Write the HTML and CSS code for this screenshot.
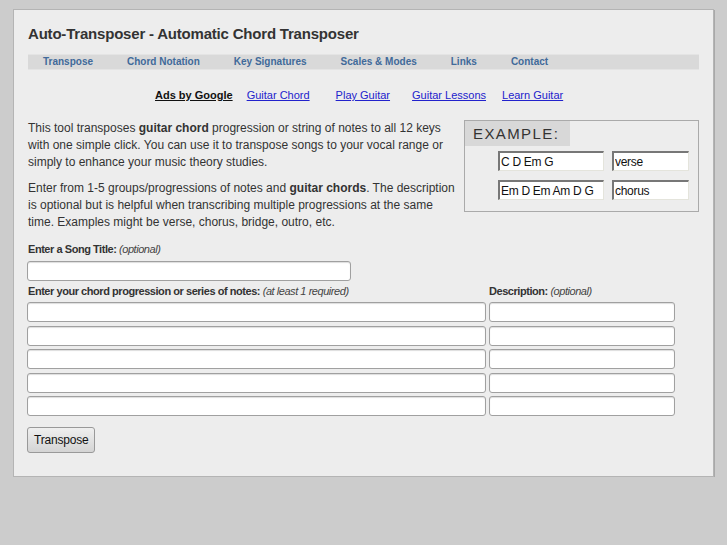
FILE: index.html
```html
<!DOCTYPE html>
<html lang="en">
<head>
  <meta charset="UTF-8">
  <title>Auto-Transposer - Automatic Chord Transposer</title>
  <link rel="stylesheet" href="styles.css">
</head>
<body>

  <div class="page">
    <!-- Header -->
    <h1 class="site-title">Auto-Transposer - Automatic Chord Transposer</h1>

    <!-- Navigation -->
    <ul class="nav">
      <li><a href="#">Transpose</a></li>
      <li><a href="#">Chord Notation</a></li>
      <li><a href="#">Key Signatures</a></li>
      <li><a href="#">Scales &amp; Modes</a></li>
      <li><a href="#">Links</a></li>
      <li><a href="#">Contact</a></li>
    </ul>

    <!-- Ad links -->
    <div class="ads">
      <a href="#" class="ads-label">Ads by Google</a>
      <a href="#" class="ad-1">Guitar Chord</a>
      <a href="#" class="ad-2">Play Guitar</a>
      <a href="#" class="ad-3">Guitar Lessons</a>
      <a href="#" class="ad-4">Learn Guitar</a>
    </div>

    <!-- Intro + example -->
    <div class="intro">
      <div class="intro-text">
        <p>This tool transposes <b>guitar chord</b> progression or string of notes to all 12 keys with one simple click. You can use it to transpose songs to your vocal range or simply to enhance your music theory studies.</p>
        <p>Enter from 1-5 groups/progressions of notes and <b>guitar chords</b>. The description is optional but is helpful when transcribing multiple progressions at the same time. Examples might be verse, chorus, bridge, outro, etc.</p>
      </div>

      <div class="example">
        <div class="example-title">EXAMPLE:</div>
        <div class="example-row">
          <input type="text" class="ex-chords" value="C D Em G" readonly>
          <input type="text" class="ex-desc" value="verse" readonly>
        </div>
        <div class="example-row">
          <input type="text" class="ex-chords" value="Em D Em Am D G" readonly>
          <input type="text" class="ex-desc" value="chorus" readonly>
        </div>
      </div>
    </div>

    <!-- Form -->
    <form class="transpose-form">
      <label class="field-label">Enter a Song Title: <i>(optional)</i></label>
      <input type="text" class="field song-title">

      <div class="labels-row">
        <label class="field-label chords-col">Enter your chord progression or series of notes: <i>(at least 1 required)</i></label>
        <label class="field-label">Description: <i>(optional)</i></label>
      </div>

      <div class="chord-rows">
        <input type="text" class="field chords"><input type="text" class="field desc">
        <input type="text" class="field chords"><input type="text" class="field desc">
        <input type="text" class="field chords"><input type="text" class="field desc">
        <input type="text" class="field chords"><input type="text" class="field desc">
        <input type="text" class="field chords"><input type="text" class="field desc">
      </div>

      <button type="button" class="btn">Transpose</button>
    </form>
  </div>

</body>
</html>
```

FILE: styles.css
```css
/* General Styles */
body {
  margin: 0;
  padding: 9px 0 0 13px;
  background: #cccccc;
  font-family: "Liberation Sans", Arial, sans-serif;
  color: #333333;
}

/* Page Container */
.page {
  width: 671px;
  height: 451px;
  padding: 15px 14px 0 14px;
  background: #ededed;
  border: 1px solid #b4b4b4;
  box-shadow: 1px 1px 0 #a8a8a8;
}

/* Header */
.site-title {
  margin: 0;
  font-size: 15px;
  letter-spacing: -0.2px;
  color: #333333;
  line-height: 18px;
}

/* Navigation */
.nav {
  display: flex;
  list-style: none;
  margin: 11px 0 0 0;
  padding: 0 0 0 15px;
  height: 14px;
  background: #d9d9d9;
  border-top: 1px solid #e4e4e4;
  border-bottom: 1px solid #e4e4e4;
}

.nav a {
  display: block;
  margin-right: 34px;
  font-size: 10px;
  font-weight: bold;
  line-height: 14px;
  color: #416a9a;
  text-decoration: none;
}

/* Ads */
.ads {
  display: flex;
  margin: 19px 0 0 0;
  padding-left: 127px;
  font-size: 11px;
}

.ads a {
  color: #2222cc;
}

.ads .ads-label {
  color: #111111;
  font-weight: bold;
}

.ads .ad-1 { margin-left: 14px; }
.ads .ad-2 { margin-left: 26px; }
.ads .ad-3 { margin-left: 22px; }
.ads .ad-4 { margin-left: 16px; }

/* Intro */
.intro {
  display: flex;
  justify-content: space-between;
  margin-top: 19px;
}

.intro-text {
  width: 428px;
}

.intro-text p {
  margin: 0 0 9px 0;
  font-size: 12px;
  line-height: 17px;
}

.intro-text p:last-child {
  margin-bottom: 0;
}

.example {
  width: 233px;
  height: 90px;
  border: 1px solid #aaaaaa;
}

.example-title {
  width: 105px;
  height: 25px;
  box-sizing: border-box;
  padding: 4px 0 0 8px;
  background: #d8d8d8;
  font-size: 15px;
  letter-spacing: 1.4px;
  color: #333333;
}

.example-row {
  display: flex;
  gap: 8px;
  margin: 5px 0 0 33px;
}

.example-row + .example-row {
  margin-top: 9px;
}

.example-row input {
  height: 20px;
  box-sizing: border-box;
  padding: 0 1px;
  font-family: "Liberation Sans", Arial, sans-serif;
  font-size: 12px;
  letter-spacing: -0.3px;
  color: #111111;
  background: #ffffff;
  border: 1px solid #e4e4dc;
  border-top: 2px solid #777777;
  border-left: 2px solid #777777;
}

.ex-chords {
  width: 106px;
}

.ex-desc {
  width: 77px;
}

/* Form */
.transpose-form {
  margin-top: 12px;
}

.field-label {
  display: block;
  font-size: 11px;
  font-weight: bold;
  letter-spacing: -0.45px;
  color: #333333;
  line-height: 13px;
}

.field-label i {
  font-weight: normal;
  color: #444444;
}

.field {
  display: block;
  box-sizing: border-box;
  height: 20px;
  margin-left: -1px;
  background: #ffffff;
  border: 1px solid #a0a0a0;
  border-radius: 3px;
  box-shadow: inset 0 1px 1px #dddddd;
}

.song-title {
  width: 324px;
  margin-top: 5px;
  margin-bottom: 4px;
}

.labels-row {
  display: flex;
}

.chords-col {
  width: 461px;
}

.chord-rows {
  display: grid;
  grid-template-columns: 458px 185px;
  column-gap: 4px;
  row-gap: 3.5px;
  margin-top: 4px;
}

/* Button */
.btn {
  margin-top: 11px;
  margin-left: -1px;
  height: 26px;
  padding: 0 6px;
  font-family: "Liberation Sans", Arial, sans-serif;
  font-size: 12px;
  letter-spacing: -0.2px;
  color: #111111;
  background: linear-gradient(#efefef, #d4d4d4);
  border: 1px solid #999999;
  border-radius: 3px;
  cursor: pointer;
}
```
